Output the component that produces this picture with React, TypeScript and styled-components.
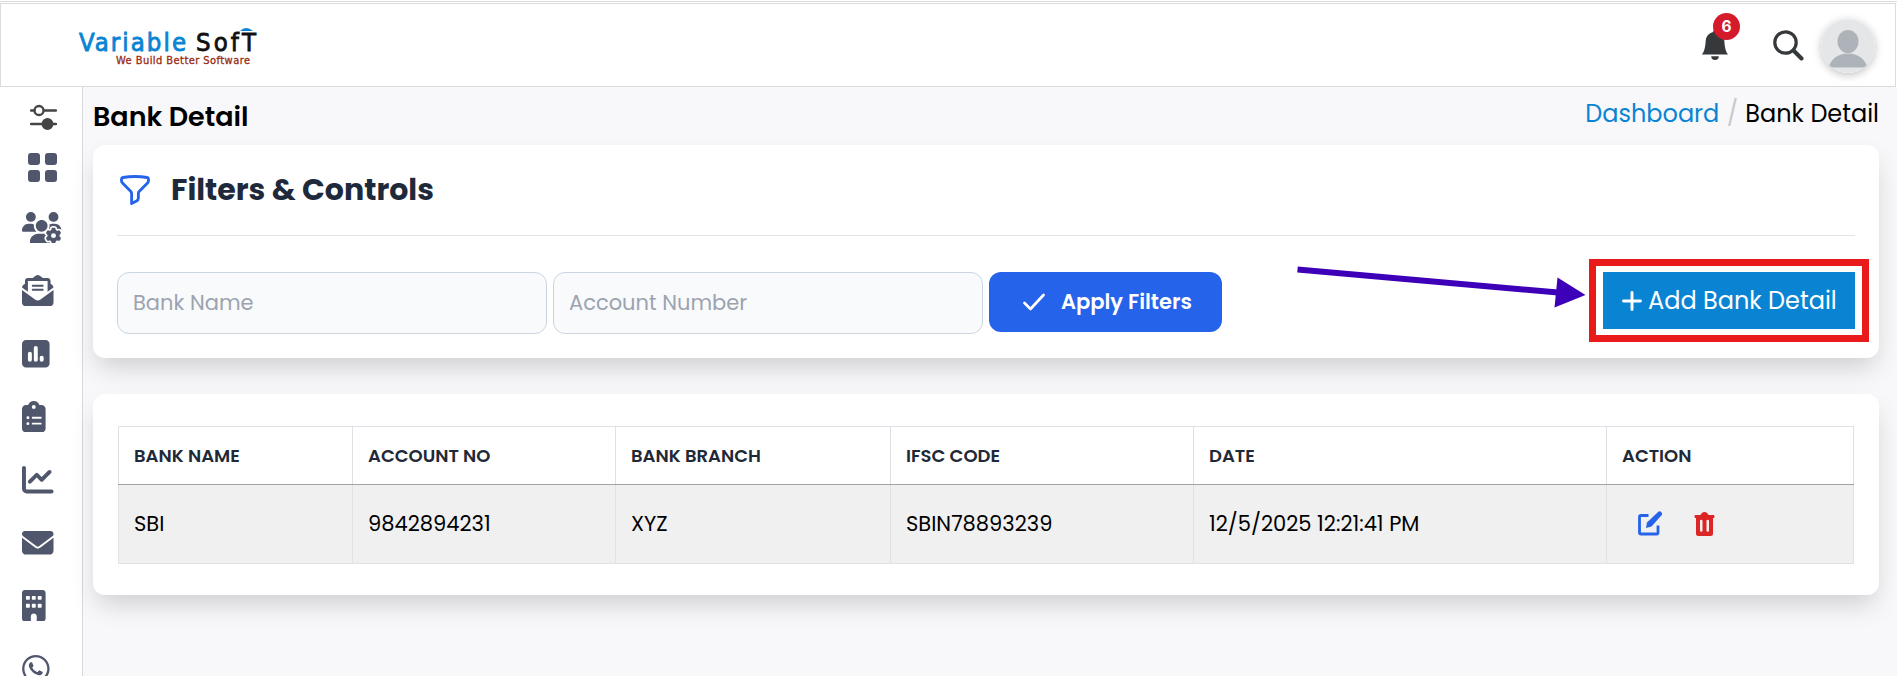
import React from "react";
import styled, { createGlobalStyle } from "styled-components";
import {
  FaUsersGear, FaEnvelopeOpenText, FaSquarePollVertical, FaClipboardList,
  FaChartLine, FaEnvelope, FaBuilding, FaWhatsapp,
} from "react-icons/fa6";
import { BsBellFill } from "react-icons/bs";

const Global = createGlobalStyle`
  *, *::before, *::after { box-sizing: border-box; }
  body { margin: 0; background: #f8f8fb; font-family: Poppins, Inter, sans-serif; color: #000; overflow: hidden; }
`;

const Page = styled.div`
  height: 676px;
  display: flex;
  flex-direction: column;
  padding-top: 1px;
  background: #fff;
`;
const TopBar = styled.header`
  flex: none;
  height: 84px;
  margin: 1px 1px 0 0;
  border: 1px solid #dcdcde;
  display: flex;
  align-items: flex-start;
  justify-content: space-between;
  background: #fff;
`;
const TopLine = styled.div`
  flex: none;
  height: 1px;
  background: #dcdcde;
`;
const Logo = styled.svg`
  display: block;
  margin: 20px 0 0 77px;
`;
const Tools = styled.div`
  display: flex;
  align-items: flex-start;
  padding-right: 20px;
`;
const BellButton = styled.div`
  position: relative;
  width: 26px;
  margin: 26px 45px 0 0;
  color: #36393b;
  svg { display: block; margin-left: -2px; }
`;
const Badge = styled.span`
  position: absolute;
  left: 11px;
  top: -17px;
  width: 27px;
  height: 27px;
  border-radius: 50%;
  background: #d51a2c;
  color: #fff;
  font: 700 15.5px/27px Inter, sans-serif;
  text-align: center;
`;
const SearchButton = styled.div`
  margin: 26px 17px 0 0;
  color: #36393b;
  svg { display: block; }
`;
const Avatar = styled.svg`
  display: block;
  margin-top: 15px;
  border-radius: 50%;
  box-shadow: 0 2px 8px rgba(0, 0, 0, 0.25);
`;

const Body = styled.div`
  flex: 1;
  min-height: 0;
  display: flex;
`;
const Sidebar = styled.nav`
  flex: none;
  width: 83px;
  overflow: hidden;
  border-right: 1px solid #d8d8da;
  background: #fff;
  color: #50566b;
  display: flex;
  flex-direction: column;
  align-items: flex-start;
  padding: 17px 0 0 22px;
`;
const SlidersIcon = styled.svg`
  flex: none;
  margin: 0 0 22px 8px;
`;
const GridIcon = styled.svg`
  flex: none;
  margin: 0 0 29.5px 6px;
`;
const NavItem = styled.div<{ $width: number }>`
  flex: none;
  height: 63px;
  padding-left: 0.4px;
  svg { display: block; height: 31.5px; width: ${(p) => p.$width}px; }
`;

const Main = styled.main`
  flex: 1;
  min-width: 0;
  background: #f8f8fb;
  padding: 0 18px 0 10px;
`;
const TitleRow = styled.div`
  height: 58px;
  display: flex;
  justify-content: space-between;
`;
const Title = styled.h1`
  margin: 14px 0 0;
  font-size: 27px;
  line-height: 32px;
  font-weight: 600;
`;
const Crumbs = styled.div`
  display: flex;
  padding-top: 10px;
  font-size: 24px;
  line-height: 33px;
`;
const CrumbLink = styled.a`
  color: #0984d3;
`;
const Slash = styled.span`
  margin: 0 7.5px;
  color: #c9c9cc;
  width: 11px;
  text-align: center;
`;

const Card = styled.section`
  border-radius: 12px;
  background: #fff;
  box-shadow: 0 13px 26px -4px rgba(0, 0, 0, 0.17);
`;
const FilterCard = styled(Card)`
  height: 213px;
  padding: 0 24px;
`;
const FilterHead = styled.div`
  height: 91px;
  display: flex;
  align-items: flex-start;
  border-bottom: 1px solid #e2e4e9;
  svg { flex: none; margin: 27px 18px 0 0; }
`;
const FilterTitle = styled.h2`
  margin: 26px 0 0;
  font-size: 30px;
  line-height: 38px;
  font-weight: 700;
  color: #1e293b;
`;
const FilterRow = styled.div`
  display: flex;
  align-items: flex-start;
  padding-top: 36px;
`;
const Field = styled.input`
  width: 430px;
  height: 62px;
  margin-right: 6px;
  padding: 0 15px 2px;
  border: 1px solid #cbd5e1;
  border-radius: 12px;
  background: #f8fafc;
  font: 400 21px Poppins, Inter, sans-serif;
  &::placeholder { color: #9ca3af; opacity: 1; }
`;
const ApplyButton = styled.button`
  width: 233px;
  height: 60px;
  padding: 0 0 1px 34px;
  border: 0;
  border-radius: 12px;
  background: #2563eb;
  color: #fff;
  display: flex;
  align-items: center;
  gap: 16px;
  white-space: nowrap;
  font: 600 21px Poppins, Inter, sans-serif;
`;
const AddArea = styled.div`
  position: relative;
  margin-left: auto;
`;
const AddButton = styled.button`
  width: 252px;
  height: 57px;
  padding: 0 0 0 19px;
  border: 0;
  background: #0984d3;
  color: #fff;
  display: flex;
  align-items: center;
  gap: 6px;
  white-space: nowrap;
  font: 400 24px Poppins, Inter, sans-serif;
`;
const Highlight = styled.div`
  position: absolute;
  left: -14px;
  top: -13px;
  width: 280px;
  height: 83px;
  border: 7px solid #e81a1a;
`;
const Arrow = styled.svg`
  position: absolute;
  left: -307px;
  top: -12px;
`;

const TableCard = styled(Card)`
  height: 201px;
  margin-top: 36px;
  padding: 32px 25px 0;
`;
const Table = styled.table`
  width: 1736px;
  table-layout: fixed;
  border-collapse: collapse;
`;
const Head = styled.th`
  height: 58px;
  padding: 0 0 0 15px;
  border: 1px solid #dee2e6;
  border-bottom-color: #a0a2a3;
  text-align: left;
  white-space: nowrap;
  font-size: 18px;
  font-weight: 600;
  color: #1f2937;
`;
const Cell = styled.td`
  height: 79px;
  padding: 0 0 2px 15px;
  border: 1px solid #dee2e6;
  border-top-color: #a0a2a3;
  background: #f0f0f0;
  white-space: nowrap;
  font-size: 21px;
`;
const Actions = styled.div`
  display: flex;
  align-items: center;
  gap: 31px;
  padding: 1px 0 0 16px;
  svg { display: block; }
`;

const columns = [
  { head: "BANK NAME", value: "SBI", width: 234 },
  { head: "ACCOUNT NO", value: "9842894231", width: 263 },
  { head: "BANK BRANCH", value: "XYZ", width: 275 },
  { head: "IFSC CODE", value: "SBIN78893239", width: 303 },
  { head: "DATE", value: "12/5/2025 12:21:41 PM", width: 413 },
];
const navIcons = [
  { Icon: FaUsersGear, width: 39.4 },
  { Icon: FaEnvelopeOpenText, width: 31.5 },
  { Icon: FaSquarePollVertical, width: 27.6 },
  { Icon: FaClipboardList, width: 23.6 },
  { Icon: FaChartLine, width: 31.5 },
  { Icon: FaEnvelope, width: 31.5 },
  { Icon: FaBuilding, width: 23.6 },
  { Icon: FaWhatsapp, width: 27.6 },
];

export default function App() {
  return (
    <Page>
      <Global />
      <TopLine />
      <TopBar>
        <Logo width="182" height="46" viewBox="78 24 182 46" fontFamily="'DejaVu Sans Condensed', 'DejaVu Sans', sans-serif" fontStretch="condensed">
          <text x="79" y="50.500" fontSize="25.500" fill="#0984d3" stroke="#0984d3" strokeWidth="0.8" textLength="107" lengthAdjust="spacing">Variable</text>
          <text x="196" y="50.500" fontSize="25.500" fill="#111" stroke="#111" strokeWidth="0.8" textLength="60" lengthAdjust="spacing">SofT</text>
          <text x="116" y="63.500" fontSize="11" fill="#9b2a12" stroke="#9b2a12" strokeWidth="0.3" textLength="134" lengthAdjust="spacing">We Build Better Software</text>
          <path d="M240 31q6-6 13 0z" fill="#0984d3" />
        </Logo>
        <Tools>
          <BellButton>
            <BsBellFill size={30} />
            <Badge>6</Badge>
          </BellButton>
          <SearchButton>
            <svg width="31" height="31" viewBox="0 0 31 31" fill="none" stroke="currentColor">
              <circle cx="12.500" cy="12.500" r="10.700" strokeWidth="3.200" />
              <path d="M20.500 20.500L28.500 28.500" strokeWidth="4" strokeLinecap="round" />
            </svg>
          </SearchButton>
          <Avatar width="54" height="54" viewBox="0 0 54 54">
            <circle cx="27" cy="27" r="27" fill="#e4e6e8" />
            <ellipse cx="27" cy="22.500" rx="10.500" ry="11.500" fill="#adb3b8" />
            <path d="M7.500 48.500C10 40 17 34.500 27 34.500S44 40 46.500 48.500z" fill="#adb3b8" />
          </Avatar>
        </Tools>
      </TopBar>
      <Body>
        <Sidebar>
          <SlidersIcon width="27" height="27" viewBox="0 0 27 27" fill="none" stroke="#444" strokeWidth="2.300">
            <path d="M1 6.500h3.500M14 6.500h12M1 20h25" strokeLinecap="round" />
            <circle cx="9" cy="6.500" r="4.500" />
            <circle cx="17.500" cy="20" r="4.800" fill="#444" />
          </SlidersIcon>
          <GridIcon width="29" height="29" viewBox="0 0 29 29" fill="currentColor">
            <rect width="12" height="12" rx="3" />
            <rect x="17" width="12" height="12" rx="3" />
            <rect y="17" width="12" height="12" rx="3" />
            <rect x="17" y="17" width="12" height="12" rx="3" />
          </GridIcon>
          {navIcons.map(({ Icon, width }, i) => <NavItem key={i} $width={width}><Icon /></NavItem>)}
        </Sidebar>
        <Main>
          <TitleRow>
            <Title>Bank Detail</Title>
            <Crumbs>
              <CrumbLink>Dashboard</CrumbLink>
              <Slash>/</Slash>
              <span>Bank Detail</span>
            </Crumbs>
          </TitleRow>
          <FilterCard>
            <FilterHead>
              <svg width="36" height="36" viewBox="0 0 24 24" fill="none" stroke="#2563eb" strokeWidth="1.900" strokeLinecap="round" strokeLinejoin="round">
                <path d="M12 3c2.755 0 5.455.232 8.083.678.533.09.917.556.917 1.096v1.044a2.250 2.250 0 01-.659 1.591l-5.432 5.432a2.250 2.250 0 00-.659 1.591v2.927a2.250 2.250 0 01-1.244 2.013L9.750 21v-6.568a2.250 2.250 0 00-.659-1.591L3.659 7.409A2.250 2.250 0 013 5.818V4.774c0-.54.384-1.006.917-1.096A48.320 48.320 0 0112 3z" />
              </svg>
              <FilterTitle>Filters &amp; Controls</FilterTitle>
            </FilterHead>
            <FilterRow>
              <Field placeholder="Bank Name" />
              <Field placeholder="Account Number" />
              <ApplyButton>
                <svg width="22" height="18" viewBox="0 0 22 18" fill="none" stroke="currentColor" strokeWidth="2.700" strokeLinecap="round" strokeLinejoin="round">
                  <path d="M1.500 10l6 6L20.500 2" />
                </svg>
                Apply Filters
              </ApplyButton>
              <AddArea>
                <AddButton>
                  <svg width="20" height="20" viewBox="0 0 20 20" stroke="currentColor" strokeWidth="2.900" strokeLinecap="round">
                    <path d="M10 1.500v17M1.500 10h17" />
                  </svg>
                  Add Bank Detail
                </AddButton>
                <Highlight />
                <Arrow width="292" height="52" viewBox="1296 260 292 52">
                  <path d="M1297.500 269.500L1558 292.500" stroke="#3d00b8" strokeWidth="6" />
                  <path d="M1557.500 277.500L1585.500 295L1554.500 307.500z" fill="#3d00b8" />
                </Arrow>
              </AddArea>
            </FilterRow>
          </FilterCard>
          <TableCard>
            <Table>
              <colgroup>
                {columns.map((c) => <col key={c.head} style={{ width: c.width }} />)}
                <col />
              </colgroup>
              <thead>
                <tr>
                  {columns.map((c) => <Head key={c.head}>{c.head}</Head>)}
                  <Head>ACTION</Head>
                </tr>
              </thead>
              <tbody>
                <tr>
                  {columns.map((c) => <Cell key={c.head}>{c.value}</Cell>)}
                  <Cell>
                    <Actions>
                      <svg width="25" height="25" viewBox="0 0 25 25" fill="none" stroke="#2563eb">
                        <path d="M10.500 4.500H3Q1.500 4.500 1.500 6V21.500Q1.500 23 3 23H18.500Q20 23 20 21.500V14.500" strokeWidth="2.800" />
                        <path d="M20.300 .8Q21.700-.5 23.200 1T23.800 4L13.500 15.500L8 17L9 11.500z" fill="#2563eb" stroke="none" />
                      </svg>
                      <svg width="21" height="24" viewBox="0 0 20 24">
                        <path d="M.8 3h5L7.500 1Q8.200 0 10 0t2.500 1l1.700 2h5Q20 3 20 4.500T19.200 6H.8Q0 6 0 4.500T.8 3z" fill="#dc2626" />
                        <path fillRule="evenodd" d="M1.500 5h17v16.500a2.500 2.500 0 01-2.500 2.500H4a2.500 2.500 0 01-2.500-2.500zM5.500 9v9.500a1.250 1.250 0 002.500 0V9a1.250 1.250 0 00-2.500 0zM12 9v9.500a1.250 1.250 0 002.500 0V9A1.250 1.250 0 0012 9z" fill="#dc2626" />
                      </svg>
                    </Actions>
                  </Cell>
                </tr>
              </tbody>
            </Table>
          </TableCard>
        </Main>
      </Body>
    </Page>
  );
}
